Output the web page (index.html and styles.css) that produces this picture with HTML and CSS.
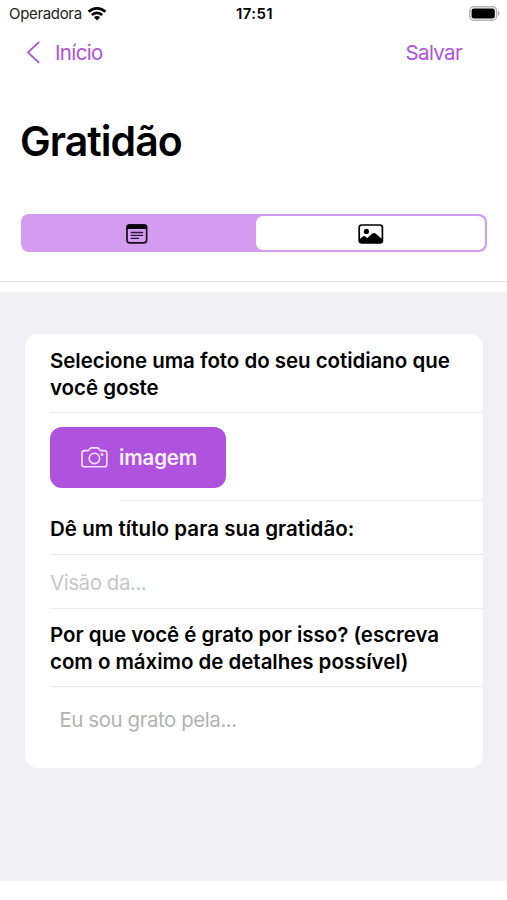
FILE: index.html
```
<!DOCTYPE html>
<html lang="pt-BR">
  <head>
    <meta charset="UTF-8" />
    <meta name="viewport" content="width=device-width, initial-scale=1.0" />
    <title>Gratidão</title>
    <link rel="stylesheet" href="styles.css">
  </head>
  <body>
    <header class="header">
      <div class="status-bar">
        <div class="carrier">
          <span class="carrier-name">Operadora</span>
          <svg class="wifi" width="20" height="15" viewBox="0 0 20 15" fill="none" stroke="#000" stroke-width="2.7">
            <path d="M1.6 5.8C6.3 1.1 13.7 1.1 18.4 5.8" />
            <path d="M4.8 9C7.7 6.1 12.3 6.1 15.2 9" />
            <path d="M10 14.4L6.9 11.3C8.6 9.6 11.4 9.6 13.1 11.3Z" fill="#000" stroke="none" />
          </svg>
        </div>
        <span class="time">17:51</span>
        <svg class="battery" width="31" height="15" viewBox="0 0 31 15">
          <rect x="0.8" y="0.8" width="26.8" height="13.4" rx="4" fill="#fff" stroke="#b5b5b5" stroke-width="1.5" />
          <rect x="2.6" y="2.6" width="23.2" height="9.8" rx="2.2" fill="#000" />
          <path d="M29 5C31 5.8 31 9.2 29 10Z" fill="#aaa" />
        </svg>
      </div>

      <nav class="navbar">
        <a href="#" class="back-link">
          <svg width="14" height="24" viewBox="0 0 14 24" fill="none" stroke="currentColor" stroke-width="1.9" stroke-linecap="round" stroke-linejoin="round">
            <path d="M12.6 2.4L2 12.4L12.6 22.4" />
          </svg>
          <span class="back-label">Início</span>
        </a>
        <a href="#" class="save-link">Salvar</a>
      </nav>

      <h1 class="title">Gratidão</h1>

      <div class="segmented">
        <button class="segment segment-text" aria-label="Texto">
          <svg width="22" height="20" viewBox="0 0 22 20">
            <rect x="1" y="1" width="19.6" height="17.8" rx="2.6" fill="none" stroke="#160b1c" stroke-width="1.7" />
            <path d="M0.4 5V3.2Q0.4 0.2 3.4 0.2H18.2Q21.2 0.2 21.2 3.2V5Z" fill="#0a050d" />
            <path d="M5.2 8.5H16.6M5.2 11.4H16.6M5.2 14.3H12.6" stroke="#2b1833" stroke-width="1.3" stroke-linecap="round" />
          </svg>
        </button>
        <button class="segment segment-active" aria-label="Imagem">
          <svg width="26" height="20" viewBox="0 0 26 20">
            <path d="M1.2 15.6L5.2 12.3Q6.2 11.6 7.2 12.4L9.3 14L14.4 9.6Q16 8.4 17.6 9.6L24.6 15.6V17Q24.6 19 22.4 19H3.4Q1.2 19 1.2 17Z" fill="#000" />
            <circle cx="8.4" cy="7.4" r="2.6" fill="#000" />
            <rect x="1.2" y="1" width="23.2" height="18" rx="2.4" fill="none" stroke="#000" stroke-width="1.7" />
          </svg>
        </button>
      </div>
    </header>

    <main class="main-content">
      <form class="card">
        <div class="row row-question row-first">
          <label>Selecione uma foto do seu cotidiano que<br>você goste</label>
        </div>
        <div class="row row-image">
          <button type="button" class="image-btn">
            <svg width="27" height="21" viewBox="0 0 27 21" fill="none" stroke="#f9e4ff" stroke-width="1.6" stroke-linejoin="round">
              <path d="M3.4 3.6H6.6Q7.6 3.6 8.2 2.7L8.9 1.8Q9.6 0.9 10.7 0.9H16.1Q17.2 0.9 17.9 1.8L18.6 2.7Q19.2 3.6 20.2 3.6H23.4Q25.8 3.6 25.8 6V17.4Q25.8 19.8 23.4 19.8H3.4Q1 19.8 1 17.4V6Q1 3.6 3.4 3.6Z" />
              <circle cx="13.4" cy="11.4" r="5.2" />
              <circle cx="21" cy="7.6" r="1.4" fill="#f9e4ff" stroke="none" />
            </svg>
            <span class="image-label">imagem</span>
          </button>
        </div>
        <div class="row row-line">
          <label class="label-title">Dê um título para sua gratidão:</label>
        </div>
        <div class="row row-line">
          <input type="text" class="title-input" placeholder="Visão da..." />
        </div>
        <div class="row row-question">
          <label>Por que você é grato por isso? (escreva<br>com o máximo de detalhes possível)</label>
        </div>
        <div class="row row-text">
          <textarea rows="1" placeholder="Eu sou grato pela..."></textarea>
        </div>
      </form>
    </main>
  </body>
</html>
```
FILE: styles.css
```
* {
  margin: 0;
  padding: 0;
  box-sizing: border-box;
  font-family: Inter, "Liberation Sans", sans-serif;
}

body {
  background-color: #fff;
  color: #000;
  height: 900px;
  overflow: hidden;
}

svg {
  display: block;
  flex-shrink: 0;
}

.header {
  height: 282px;
  border-bottom: 1px solid #e6e6e8;
}

.status-bar {
  display: grid;
  grid-template-columns: 1fr auto 1fr;
  align-items: center;
  height: 27px;
  padding: 0 7px 0 9px;
}

.carrier {
  display: flex;
  align-items: center;
  gap: 5px;
}

.carrier-name {
  font-size: 15px;
  letter-spacing: -0.33px;
  color: #222;
}

.time {
  font-size: 15px;
  font-weight: 600;
  letter-spacing: 0.4px;
}

.battery {
  justify-self: end;
}

.navbar {
  display: flex;
  justify-content: space-between;
  align-items: center;
  height: 50px;
  padding: 0 45px 0 26px;
}

.navbar a {
  color: #af52de;
  text-decoration: none;
  font-size: 20.5px;
  letter-spacing: -0.65px;
}

.back-link {
  display: flex;
  align-items: center;
  gap: 15px;
}

.title {
  margin: 39px 0 0 20px;
  font-size: 41px;
  line-height: 50px;
  font-weight: 600;
  letter-spacing: -0.95px;
}

.segmented {
  display: flex;
  height: 38px;
  margin: 48px 20px 0 20.5px;
  padding: 2px;
  border-radius: 8px;
  background-color: #d49cf0;
}

.segment {
  display: flex;
  justify-content: center;
  align-items: center;
  flex: 1;
  padding-top: 1px;
  border: none;
  border-radius: 7px;
  background: none;
}

.segment-text {
  flex: 0 0 233.5px;
  padding-right: 4px;
}

.segment-active {
  background-color: #fff;
}

.main-content {
  height: 589px;
  margin-top: 10px;
  padding: 42px 24px 0 25px;
  background-color: #f1f0f5;
}

.card {
  height: 434px;
  padding-left: 25px;
  border-radius: 13px;
  background-color: #fff;
}

.row {
  display: flex;
  align-items: center;
  border-bottom: 1px solid #ebebed;
}

.row-question {
  height: 78px;
}

.row-first {
  height: 79px;
  padding-top: 2px;
}

.row-image {
  height: 88px;
  border-bottom: none;
  background: linear-gradient(#ebebed, #ebebed) 70px 100% / 100% 1px no-repeat;
}

.row-line {
  height: 54px;
  padding-top: 2px;
}

.row-text {
  height: 65px;
  border-bottom: none;
}

label {
  font-size: 20.5px;
  line-height: 27px;
  font-weight: 600;
  letter-spacing: -0.04px;
  white-space: nowrap;
}

.label-title {
  letter-spacing: 0.05px;
}

.image-btn {
  display: flex;
  align-items: center;
  gap: 11px;
  width: 176px;
  height: 61px;
  padding-left: 31px;
  border: none;
  border-radius: 12px;
  background-color: #af52de;
}

.image-label {
  color: #fdf0ff;
  font-size: 20.5px;
  font-weight: 600;
  letter-spacing: -0.15px;
}

input,
textarea {
  width: 100%;
  border: none;
  outline: none;
  background: none;
  resize: none;
  font-size: 20.5px;
  line-height: 27px;
  letter-spacing: -0.45px;
  overflow: hidden;
}

.title-input::placeholder {
  color: #c7c7c9;
}

textarea {
  padding-left: 9.5px;
}

textarea::placeholder {
  color: #b3b3b3;
}
```
